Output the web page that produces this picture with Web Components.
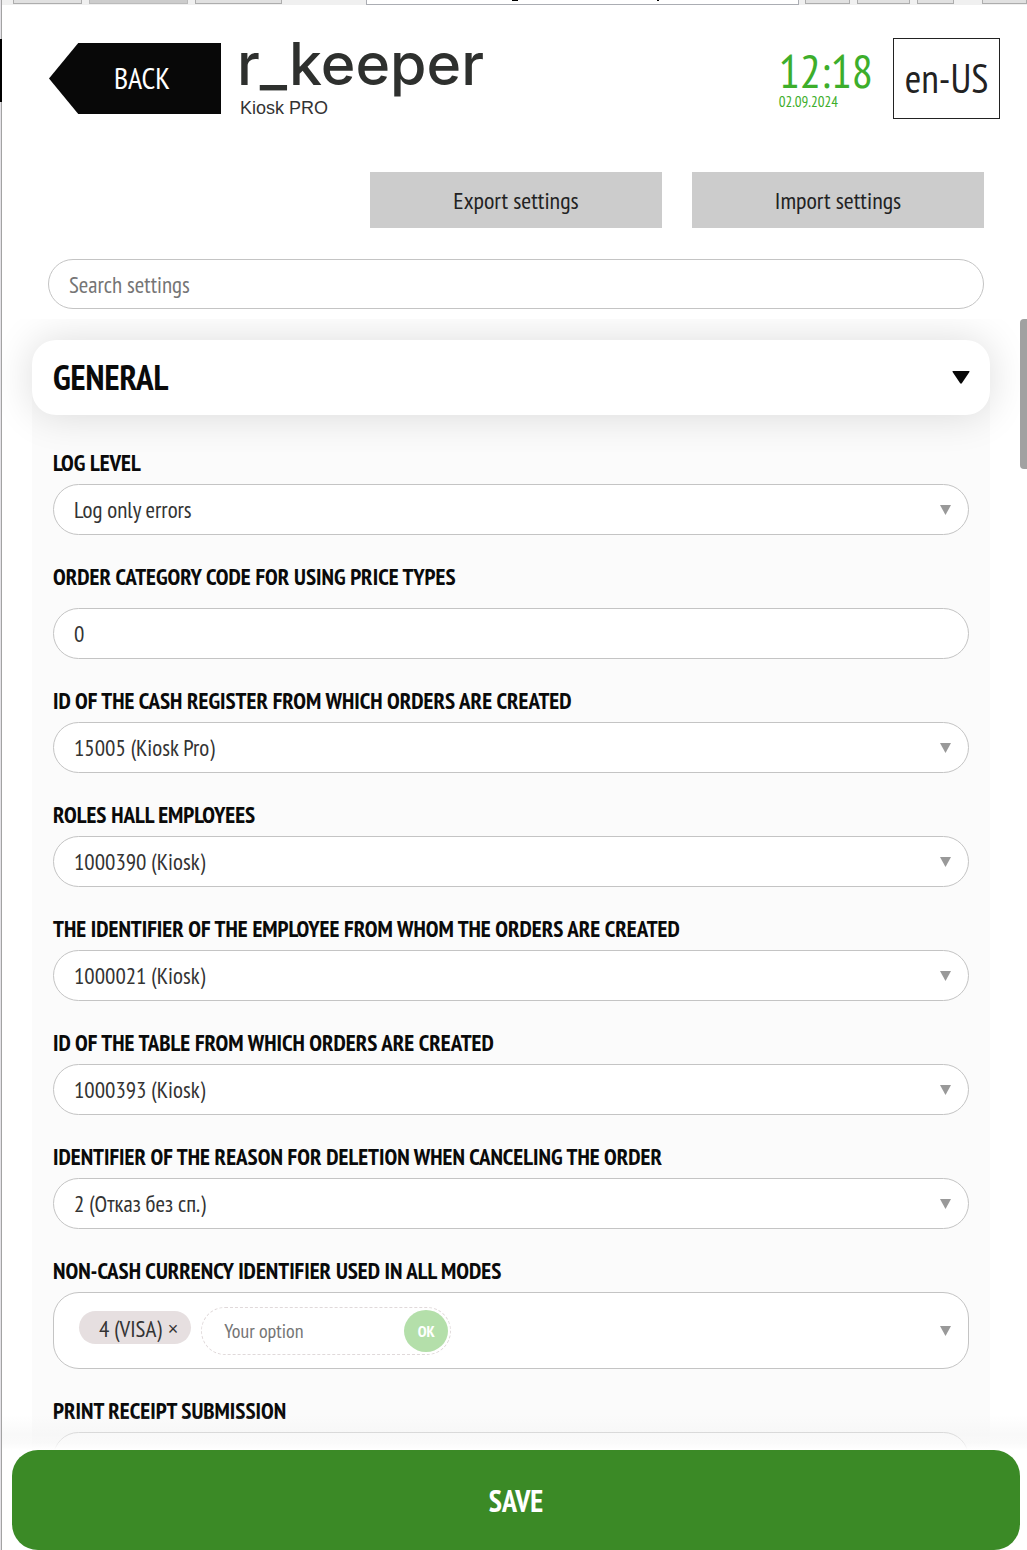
<!DOCTYPE html>
<html lang="en">
<head>
<meta charset="utf-8">
<meta name="viewport" content="width=device-width, initial-scale=1">
<title>r_keeper Kiosk PRO settings</title>
<style>
  html, body { margin: 0; height: 100%; }
  body {
    font-family: "PT Sans Narrow", "Liberation Sans Narrow", "Liberation Sans", sans-serif;
    color: #222;
    background: #fff;
    overflow: hidden;
  }
</style>
</head>
<body>
<kiosk-app>
  <window-strip slot="strip"></window-strip>
  <kiosk-header slot="header" time="12:18" date="02.09.2024" locale="en-US"></kiosk-header>
  <settings-toolbar slot="toolbar"></settings-toolbar>
  <settings-section heading="General">
    <select-field label="Log level" value="Log only errors"></select-field>
    <text-field label="Order category code for using price types" value="0"></text-field>
    <select-field label="ID of the cash register from which orders are created" value="15005 (Kiosk Pro)"></select-field>
    <select-field label="Roles hall employees" value="1000390 (Kiosk)"></select-field>
    <select-field label="The identifier of the employee from whom the orders are created" value="1000021 (Kiosk)"></select-field>
    <select-field label="ID of the table from which orders are created" value="1000393 (Kiosk)"></select-field>
    <select-field label="Identifier of the reason for deletion when canceling the order" value="2 (Отказ без сп.)"></select-field>
    <tags-field label="Non-cash currency identifier used in all modes" value="4 (VISA)"></tags-field>
    <select-field label="Print receipt submission" value=""></select-field>
  </settings-section>
  <save-bar slot="footer">SAVE</save-bar>
</kiosk-app>

<script>
const define = (name, render) => customElements.define(name, class extends HTMLElement {
  connectedCallback() {
    if (this.shadowRoot) return;
    const t = document.createElement('template');
    t.innerHTML = render(this);
    this.attachShadow({ mode: 'open' }).append(t.content.cloneNode(true));
  }
});

const base = `
  :host, *, *::before, *::after { box-sizing: border-box; }
  button, input, select { font: inherit; color: inherit; margin: 0; }
  button { cursor: pointer; }
`;

const fieldStyles = `
  ${base}
  :host { display: flex; flex-direction: column; gap: 7px; }
  label { font-size: 23px; line-height: 28px; font-weight: 700; color: #0a0a0a; text-transform: uppercase; white-space: nowrap; }
  .box { display: grid; align-items: center; }
  .box > * { grid-area: 1 / 1; }
  .control {
    width: 100%; height: 51px; padding: 1px 20px 0; border: 1px solid #c4c4c4; border-radius: 26px;
    background: #fff; font-size: 23px; line-height: 26px; color: #333; outline: 0; appearance: none;
  }
  input.control { padding-top: 0; }
  .arrow { justify-self: end; margin-right: 18px; width: 11px; height: 10px; fill: #999; pointer-events: none; }
`;
const arrow = `<svg class="arrow" viewBox="0 0 11 10" aria-hidden="true"><path d="M0 0H11L5.5 10Z"/></svg>`;

define('kiosk-app', () => `
  <style>
    ${base}
    :host { display: flex; height: 100vh; min-height: 600px; }
    .edge { flex: none; width: 2px; display: flex; flex-direction: column; background: #e3e1e6; border-right: 1px solid #a3a3a3; }
    .edge i { height: 63px; margin: 39px -1px 0 0; background: #000; }
    .page { flex: 1; min-width: 0; display: flex; flex-direction: column; }
    .scroll { flex: 1; min-height: 0; overflow: hidden; display: flex; align-items: flex-start; gap: 30px; padding-left: 30px; }
    .view { flex: 1; min-width: 0; padding-top: 21px; }
    .thumb { flex: none; width: 7px; height: 150px; background: #a1a1a1; border-radius: 4px 0 0 4px; }
  </style>
  <div class="edge"><i></i></div>
  <div class="page">
    <slot name="strip"></slot>
    <slot name="header"></slot>
    <slot name="toolbar"></slot>
    <main class="scroll"><div class="view"><slot></slot></div><div class="thumb"></div></main>
    <slot name="footer"></slot>
  </div>`);

define('window-strip', () => `
  <style>
    ${base}
    :host { display: flex; height: 5px; padding-left: 11px; background: #f0f0f0; }
    i { height: 4px; margin-right: 7px; background: #e1e1e1; border: solid #adadad; border-width: 0 1px 1px; }
    .on { background: #ccc; border-color: #bbb; }
    .address { flex: 1; height: 5px; margin: 0 6px 0 77px; background: #fff; border-color: #abadb3; display: flex; }
    .address b { width: 6px; height: 1px; margin-left: 145px; background: #000; }
    .address b + b { width: 2px; margin-left: 139px; }
  </style>
  <i style="width:69px"></i><i class="on" style="width:99px"></i><i style="width:87px"></i>
  <i class="address"><b></b><b></b></i>
  <i style="width:45px"></i><i style="width:53px"></i><i style="width:37px;margin-right:28px"></i><i style="width:45px;margin-right:0"></i>`);

define('kiosk-header', el => `
  <style>
    ${base}
    :host { display: flex; align-items: flex-start; height: 167px; padding: 33px 27px 0 47px; }
    .back {
      width: 172px; height: 71px; margin-top: 5px; padding: 0 0 2px 14px; border: 0; background: #080808; color: #fff; font-size: 30px;
      clip-path: polygon(17% 0, 100% 0, 100% 100%, 17% 100%, 0 50%);
    }
    .brand { display: flex; flex-direction: column; gap: 7px; padding-left: 16px; color: #2e302e; }
    .logo { font: 500 59px/52px Inter, sans-serif; }
    .product { padding-left: 3px; font: 18px/22px "Liberation Sans", sans-serif; color: #333; }
    .clock { display: flex; flex-direction: column; margin: 9px 20px 0 auto; color: #3dae2b; }
    .time { font-size: 47px; line-height: 48px; }
    .date { font-size: 15px; line-height: 14px; }
    .locale { width: 107px; height: 81px; padding: 0 0 2px; border: 1px solid #222; background: #fff; font-size: 40px; color: #222; }
  </style>
  <button class="back" type="button">BACK</button>
  <div class="brand"><span class="logo">r_keeper</span><span class="product">Kiosk PRO</span></div>
  <div class="clock"><span class="time">${el.getAttribute('time')}</span><span class="date">${el.getAttribute('date')}</span></div>
  <button class="locale" type="button">${el.getAttribute('locale')}</button>`);

define('settings-toolbar', () => `
  <style>
    ${base}
    :host { display: flex; flex-direction: column; gap: 31px; padding: 0 43px 10px 46px; }
    .actions { display: grid; grid-template-columns: repeat(3, 1fr); gap: 30px; }
    button { height: 56px; border: 0; background: #ccc; color: #222; font-size: 24px; padding: 0; }
    button:first-child { grid-column: 2; }
    input { width: 100%; height: 50px; padding: 0 20px; border: 1px solid #c4c4c4; border-radius: 25px; background: #fff; font-size: 23px; outline: 0; }
    input::placeholder { color: #757575; opacity: 1; }
  </style>
  <div class="actions"><button type="button">Export settings</button><button type="button">Import settings</button></div>
  <input type="search" placeholder="Search settings" aria-label="Search settings">`);

define('settings-section', el => `
  <style>
    ${base}
    :host { display: block; background: #fbfbfb; border-radius: 24px 24px 0 0; }
    h2 { margin: 0; font-size: inherit; }
    .head {
      width: 100%; height: 75px; padding: 0 20px 0 21px; border: 0; border-radius: 24px; background: #fff; box-shadow: 0 0 40px rgba(0,0,0,.14);
      display: flex; align-items: center; justify-content: space-between; color: #0a0a0a; font-size: 35px; font-weight: 700; text-transform: uppercase;
    }
    .head span { padding-bottom: 2px; }
    svg { width: 18px; height: 13px; }
    .fields { display: flex; flex-direction: column; gap: 28px; padding: 34px 21px 29px; }
  </style>
  <h2><button class="head" type="button" aria-expanded="true"><span>${el.getAttribute('heading')}</span>
    <svg viewBox="0 0 18 13" aria-hidden="true"><path d="M1 0H17Q18 0 17.400 1L10 12Q9 13.500 8 12L.6 1Q0 0 1 0Z" fill="#080808"/></svg></button></h2>
  <div class="fields"><slot></slot></div>`);

define('select-field', el => `
  <style>${fieldStyles}</style>
  <label for="c">${el.getAttribute('label')}</label>
  <div class="box"><select class="control" id="c"><option>${el.getAttribute('value')}</option></select>${arrow}</div>`);

define('text-field', el => `
  <style>${fieldStyles} :host { gap: 17px; }</style>
  <label for="c">${el.getAttribute('label')}</label>
  <div class="box"><input class="control" id="c" type="text" value="${el.getAttribute('value')}"></div>`);

define('tags-field', el => `
  <style>
    ${fieldStyles}
    .tags { display: flex; align-items: center; gap: 10px; height: 77px; padding: 0 25px; }
    .tag { display: flex; align-items: center; gap: 6px; height: 33px; margin-bottom: 6px; padding: 2px 13px 0 20px; border-radius: 17px; background: #e6dfe0; color: #333; white-space: nowrap; }
    .tag button { padding: 0; border: 0; background: none; font: 18px/22px "Liberation Sans", sans-serif; }
    .add { display: flex; align-items: center; width: 250px; height: 48px; padding: 0 2px 0 22px; border: 1px dashed #e0d9da; border-radius: 24px; }
    .add input { flex: 1; min-width: 0; padding: 0; border: 0; outline: 0; background: none; font-size: 20px; }
    .add input::placeholder { color: #757575; opacity: 1; }
    .add button { flex: none; width: 44px; height: 42px; padding: 0; border: 0; border-radius: 50%; background: #b4dfaa; color: #fff; font-size: 16px; font-weight: 700; }
  </style>
  <label for="c">${el.getAttribute('label')}</label>
  <div class="box">
    <div class="control tags">
      <span class="tag">${el.getAttribute('value')}<button type="button" aria-label="Remove">×</button></span>
      <span class="add"><input id="c" type="text" placeholder="Your option"><button type="button">OK</button></span>
    </div>${arrow}
  </div>`);

define('save-bar', () => `
  <style>
    ${base}
    :host { display: block; position: relative; padding: 0 7px 0 10px; }
    :host::before {
      content: ""; position: absolute; left: 0; right: 0; bottom: 100%; height: 35px; pointer-events: none;
      background: linear-gradient(rgba(240,240,240,0), rgba(243,243,243,.5) 55%, rgba(248,248,248,.7) 80%, #fff);
    }
    button { display: block; width: 100%; height: 100px; padding: 0; border: 0; border-radius: 26px; background: #3b8a26; color: #fff; font-size: 30px; font-weight: 700; }
  </style>
  <button type="button"><slot></slot></button>`);
</script>
</body>
</html>
